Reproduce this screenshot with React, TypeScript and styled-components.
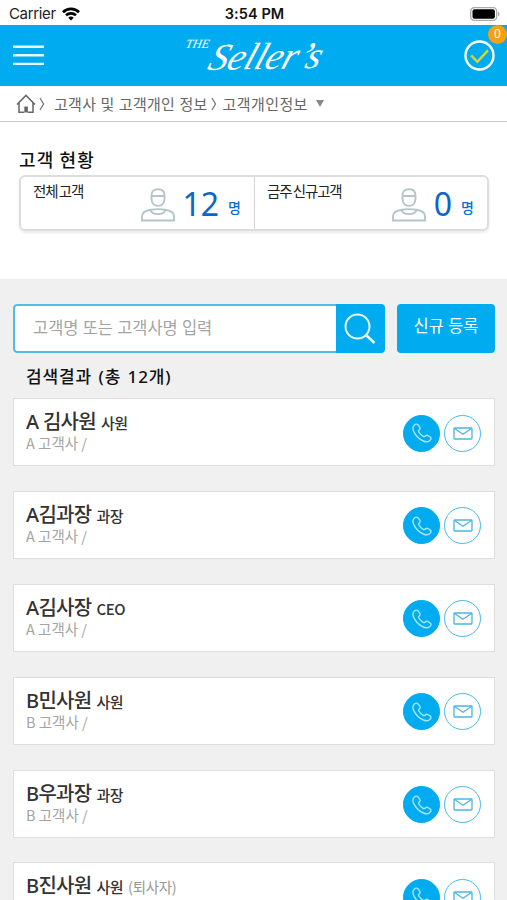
import React from 'react';
import styled, { createGlobalStyle } from 'styled-components';

const BLUE = '#00abef';

const GlobalStyle = createGlobalStyle`
  *, *::before, *::after { box-sizing: border-box; }
  html, body { margin: 0; height: 900px; overflow: hidden; background: #f0f0f0; }
  body { font-family: "Noto Sans", "Noto Sans CJK KR", sans-serif; color: #333; }
  button, input { font: inherit; margin: 0; }
  svg { display: block; flex: none; }
`;

const Screen = styled.div`
  width: 507px;
  height: 900px;
  overflow: hidden;
  display: flex;
  flex-direction: column;
  background: #f0f0f0;
`;

const StatusBar = styled.div`
  height: 25px;
  flex: none;
  display: grid;
  grid-template-columns: 1fr auto 1fr;
  align-items: center;
  padding: 2px 7px 0 9px;
  background: #fff;
  color: #222;
  font: 15px/22px Inter, sans-serif;
`;

const Carrier = styled.div`
  display: flex;
  align-items: center;
  gap: 6px;
  letter-spacing: -0.35px;
`;

const Clock = styled.div`
  font-weight: 600;
  font-size: 14.5px;
  letter-spacing: 0.1px;
  color: #111;
`;

const BatterySlot = styled.div`
  justify-self: end;
`;

const Header = styled.header`
  height: 61px;
  flex: none;
  display: grid;
  grid-template-columns: 1fr auto 1fr;
  align-items: center;
  padding: 0 12px 0 13px;
  background: ${BLUE};
  color: #fff;
`;

const IconButton = styled.button`
  border: 0;
  padding: 0;
  background: none;
  color: inherit;
  justify-self: start;
`;

const Alerts = styled.div`
  position: relative;
  justify-self: end;
`;

const Badge = styled.span`
  position: absolute;
  top: -15px;
  right: -12px;
  width: 19px;
  height: 19px;
  border-radius: 50%;
  background: #faa010;
  color: #fff;
  font-size: 12px;
  line-height: 18px;
  text-align: center;
`;

const Logo = styled.div`
  display: flex;
  align-items: flex-start;
  width: 140px;
  height: 42px;
  margin-left: 1px;
  font-family: "Liberation Serif", serif;
  font-style: italic;
  white-space: nowrap;
`;

const LogoSmall = styled.span`
  font-size: 12.5px;
  line-height: 14px;
  transform: skewX(-12deg);
  padding: 2px 0 0 1px;
`;

const LogoMain = styled.span`
  margin-left: 2px;
  font-size: 38px;
  line-height: 42px;
  letter-spacing: -0.2px;
  transform: skewX(-20deg) rotate(-1deg);
`;

const Breadcrumb = styled.nav`
  height: 36px;
  flex: none;
  display: flex;
  align-items: center;
  padding-left: 16px;
  background: #fff;
  border-bottom: 1px solid #c8c8c8;
  color: #666;
  font-size: 15px;
  line-height: 34px;
  white-space: nowrap;
`;

const Crumb = styled.span<{ $before: number; $spacing: number }>`
  margin-left: ${(p) => p.$before}px;
  letter-spacing: ${(p) => p.$spacing}px;
`;

const Chevron = styled.svg<{ $before: number }>`
  margin-left: ${(p) => p.$before}px;
`;

const Caret = styled.span`
  margin-left: 8px;
  border: 4px solid transparent;
  border-top: 7px solid #888;
  border-bottom: 0;
`;

const Summary = styled.section`
  height: 157px;
  flex: none;
  padding: 24px 18px 0 19px;
  background: #fff;
`;

const SummaryTitle = styled.h2`
  margin: 0 0 2px;
  font-size: 18px;
  font-weight: 500;
  line-height: 27px;
  letter-spacing: 1.1px;
  color: #111;
  font-family: "Noto Sans CJK KR", sans-serif;
`;

const StatBox = styled.div`
  display: grid;
  grid-template-columns: 1fr 1fr;
  grid-template-rows: 100%;
  height: 56px;
  border: 2px solid #dcdddd;
  border-radius: 6px;
  box-shadow: 0 2px 3px rgba(0, 0, 0, 0.08);
`;

const Stat = styled.div`
  display: flex;
  align-items: flex-start;
  padding: 0 13px 0 12px;
  white-space: nowrap;

  & + & {
    border-left: 1px solid #d4d4d4;
  }
`;

const StatLabel = styled.span`
  flex: 1;
  font-size: 14.5px;
  line-height: 29px;
  letter-spacing: -1.2px;
  word-spacing: -1px;
  color: #222;
`;

const StatIcon = styled.svg`
  margin-top: 11px;
`;

const StatValue = styled.span`
  margin-left: 8px;
  font-size: 32px;
  line-height: 53px;
  color: #0a66c8;
`;

const StatUnit = styled.span`
  margin-left: 9px;
  padding-top: 8px;
  font-size: 14px;
  font-weight: 500;
  line-height: 46px;
  color: #0a6fd0;
`;

const SearchRow = styled.div`
  flex: none;
  display: flex;
  gap: 12px;
  padding: 25px 12px 0 13px;
`;

const SearchField = styled.div`
  flex: 1;
  display: flex;
  height: 49px;
  border-radius: 4px;
  overflow: hidden;
`;

const SearchInput = styled.input`
  flex: 1;
  min-width: 0;
  border: 2px solid #4fbde8;
  border-right: 0;
  border-radius: 4px 0 0 4px;
  padding: 0 0 2px 18px;
  background: #fff;
  font-size: 16.5px;
  letter-spacing: -0.05px;
  outline: 0;

  &::placeholder {
    color: #a4a4a4;
    opacity: 1;
  }
`;

const SearchButton = styled.button`
  width: 49px;
  border: 0;
  padding: 1px 0 0 8px;
  background: ${BLUE};
  color: #fff;
`;

const AddButton = styled.button`
  width: 98px;
  height: 49px;
  border: 0;
  border-radius: 4px;
  padding: 0 0 7px;
  background: ${BLUE};
  color: #fff;
  font-size: 16.5px;
`;

const ResultTitle = styled.h3`
  flex: none;
  margin: 9px 0 7px 26px;
  font-size: 17px;
  font-weight: 500;
  line-height: 29px;
  letter-spacing: 0.9px;
  word-spacing: 1px;
  color: #111;
`;

const List = styled.ul`
  flex: none;
  list-style: none;
  margin: 0;
  padding: 0 12px 0 13px;
  display: grid;
  gap: 24.9px;
`;

const Card = styled.li`
  height: 68px;
  display: flex;
  align-items: center;
  gap: 4px;
  padding: 2px 13px 0 12px;
  border: 1px solid #dedede;
  background: #fff;
`;

const Person = styled.div`
  flex: 1;
  height: 64px;
  padding-top: 8px;
  white-space: nowrap;
`;

const NameLine = styled.div`
  display: flex;
  align-items: baseline;
  line-height: 25px;
  height: 25px;
  color: #333;
`;

const Name = styled.span`
  font-size: 20px;
  font-weight: 500;
  letter-spacing: -0.7px;
`;

const Role = styled.span`
  margin-left: 5px;
  font-family: "Noto Sans CJK KR", sans-serif;
  font-size: 15px;
  font-weight: 500;
  letter-spacing: -0.5px;
`;

const Note = styled.span`
  margin-left: 5px;
  font-family: "Noto Sans CJK KR", sans-serif;
  font-size: 14.5px;
  letter-spacing: -0.3px;
  color: #999;
`;

const Company = styled.div`
  font-family: "Noto Sans CJK KR", sans-serif;
  font-size: 14.5px;
  line-height: 18px;
  color: #a4a4a4;
`;

const ContactButton = styled.button<{ $filled?: boolean }>`
  width: 37px;
  height: 37px;
  flex: none;
  display: grid;
  place-items: center;
  padding: 0;
  border: 1.5px solid ${(p) => (p.$filled ? BLUE : '#45bbe9')};
  border-radius: 50%;
  background: ${(p) => (p.$filled ? BLUE : '#fff')};
  color: ${(p) => (p.$filled ? '#a5e6ff' : '#49b5e2')};
`;

const WifiIcon = () => (
  <svg width="18" height="14" viewBox="0 0 18 14" fill="none" stroke="#000" strokeWidth="2.7">
    <path d="M1 5.2a11.4 11.4 0 0 1 16 0M4 8.3a7.2 7.2 0 0 1 10 0" />
    <path d="M6.3 10.8a4 4 0 0 1 5.4 0L9 13.6z" fill="#000" stroke="none" />
  </svg>
);

const BatteryIcon = () => (
  <svg width="30" height="14" viewBox="0 0 30 14">
    <rect x="0.7" y="0.7" width="26" height="12.6" rx="3.6" fill="#fff" stroke="#aaa" strokeWidth="1.3" />
    <rect x="2.5" y="2.3" width="22.4" height="9.4" rx="2" fill="#000" />
    <path d="M28 4.7c2 .8 2 3.8 0 4.6z" fill="#aaa" />
  </svg>
);

const MenuIcon = () => (
  <svg width="31" height="21" viewBox="0 0 31 21" stroke="#e9fbff" strokeWidth="2.4">
    <path d="M0 1.7h31M0 10.2h31M0 18.9h31" />
  </svg>
);

const CheckIcon = () => (
  <svg width="31" height="31" viewBox="0 0 31 31" fill="none">
    <circle cx="15.5" cy="15.5" r="14" stroke="#fff" strokeWidth="2.4" />
    <path d="M7.2 15.4l6.1 6.4L24 10.3" stroke="#d8d52c" strokeWidth="2.5" />
  </svg>
);

const HomeIcon = () => (
  <svg width="20" height="20" viewBox="0 0 20 20" fill="none" stroke="#666" strokeWidth="1.5">
    <path d="M1 10.6L10 1.4l9 9.2M3 9v9.3h5.200M17 9v9.300h-5.200" />
    <path d="M8.300 12.500h3.600v6H8.300z" fill="#666" stroke="none" />
  </svg>
);

const Arrow = ({ before }: { before: number }) => (
  <Chevron $before={before} width="6" height="14" viewBox="0 0 6 14" fill="none" stroke="#777" strokeWidth="1.3">
    <path d="M1 1l3.5 6L1 13" />
  </Chevron>
);

const UserIcon = () => (
  <StatIcon width="34" height="34" viewBox="0 0 34 34" fill="none" stroke="#b4c5c8" strokeWidth="1.9">
    <path d="M10.5 7.5C10.5 3.5 12.5 1.3 17 1.3s6.5 2.2 6.5 6.2v3.2c0 4.6-3 7.2-6.5 7.2s-6.5-2.6-6.5-7.200zM10.500 8h13" />
    <path d="M1 32.500v-4.500c0-3.500 3.500-5.500 9-6.300 3-.5 11-.5 14 0 5.500.8 9 2.800 9 6.300v4.500z" />
    <path d="M9.500 22c1.500 5.500 13.500 5.500 15 0" />
  </StatIcon>
);

const SearchIcon = () => (
  <svg width="32" height="32" viewBox="0 0 32 32" fill="none" stroke="#e6f9ff" strokeWidth="2">
    <circle cx="13.5" cy="13.5" r="12" />
    <path d="M22 22l8.500 8" strokeWidth="2.500" />
  </svg>
);

const PhoneIcon = () => (
  <svg width="20" height="20" viewBox="0 0 20 20" fill="none" stroke="currentColor" strokeWidth="1.400" strokeLinejoin="round">
    <path d="M2.200 2.200C.6 3.800.6 6.200 1.800 8.600c2 4.200 5.200 7.400 9.600 9.400 2.400 1.100 4.800 1 6.400-.6 1.600-1.500 1.500-2.500.2-3.500l-1.700-1.200c-1.200-.9-2.100-.7-3 .3-.8.900-1.500.8-2.500.1-1.500-1-2.700-2.200-3.700-3.700-.7-1-.7-1.700.2-2.500 1-.9 1.200-1.800.3-3L6.300 2.200C5.200.8 3.700.7 2.200 2.200z" />
  </svg>
);

const MailIcon = () => (
  <svg width="20" height="13" viewBox="0 0 20 13" fill="none" stroke="currentColor" strokeWidth="1.300">
    <rect x="1" y="1" width="18" height="11" rx=".7" />
    <path d="M1.200 1.300L10 7.300l8.800-6" />
  </svg>
);

const stats = [
  { label: '전체 고객', value: 12 },
  { label: '금주 신규고객', value: 0 },
];

const customers = [
  { name: 'A 김사원', role: '사원', company: 'A 고객사 /' },
  { name: 'A김과장', role: '과장', company: 'A 고객사 /' },
  { name: 'A김사장', role: 'CEO', company: 'A 고객사 /' },
  { name: 'B민사원', role: '사원', company: 'B 고객사 /' },
  { name: 'B우과장', role: '과장', company: 'B 고객사 /' },
  { name: 'B진사원', role: '사원', company: 'B 고객사 /', note: '(퇴사자)' },
];

export default function App() {
  return (
    <Screen>
      <GlobalStyle />
      <StatusBar>
        <Carrier>Carrier <WifiIcon /></Carrier>
        <Clock>3:54 PM</Clock>
        <BatterySlot><BatteryIcon /></BatterySlot>
      </StatusBar>
      <Header>
        <IconButton aria-label="메뉴"><MenuIcon /></IconButton>
        <Logo>
          <LogoSmall>THE</LogoSmall>
          <LogoMain>Seller’s</LogoMain>
        </Logo>
        <Alerts>
          <CheckIcon />
          <Badge>0</Badge>
        </Alerts>
      </Header>
      <Breadcrumb>
        <HomeIcon />
        <Arrow before={3} />
        <Crumb $before={9} $spacing={0.3}>고객사 및 고객개인 정보</Crumb>
        <Arrow before={3} />
        <Crumb $before={6} $spacing={0.4}>고객개인정보</Crumb>
        <Caret />
      </Breadcrumb>
      <Summary>
        <SummaryTitle>고객 현황</SummaryTitle>
        <StatBox>
          {stats.map((s) => (
            <Stat key={s.label}>
              <StatLabel>{s.label}</StatLabel>
              <UserIcon />
              <StatValue>{s.value}</StatValue>
              <StatUnit>명</StatUnit>
            </Stat>
          ))}
        </StatBox>
      </Summary>
      <SearchRow>
        <SearchField>
          <SearchInput placeholder="고객명 또는 고객사명 입력" />
          <SearchButton aria-label="검색"><SearchIcon /></SearchButton>
        </SearchField>
        <AddButton>신규 등록</AddButton>
      </SearchRow>
      <ResultTitle>검색결과 (총 12개)</ResultTitle>
      <List>
        {customers.map((c) => (
          <Card key={c.name}>
            <Person>
              <NameLine>
                <Name>{c.name}</Name>
                <Role>{c.role}</Role>
                {c.note && <Note>{c.note}</Note>}
              </NameLine>
              <Company>{c.company}</Company>
            </Person>
            <ContactButton $filled aria-label="전화"><PhoneIcon /></ContactButton>
            <ContactButton aria-label="메일"><MailIcon /></ContactButton>
          </Card>
        ))}
      </List>
    </Screen>
  );
}
